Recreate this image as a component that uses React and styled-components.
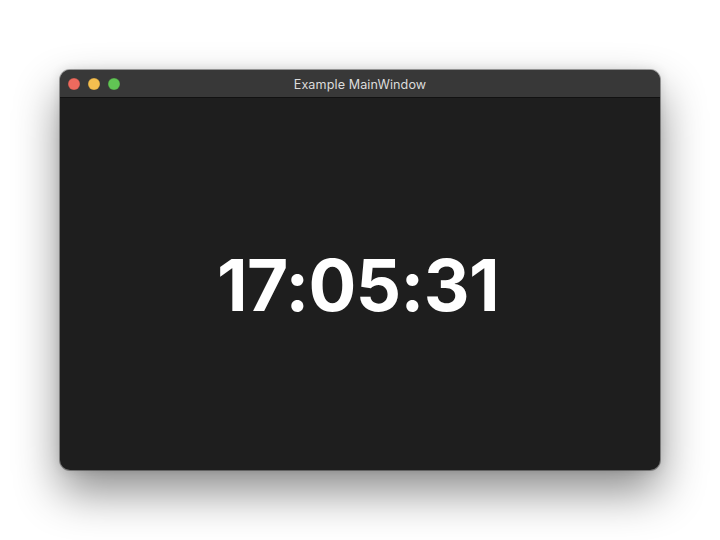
import React from "react";
import styled, { createGlobalStyle } from "styled-components";

const Global = createGlobalStyle`
  html, body { margin: 0; padding: 0; background: #ffffff; }
  body { width: 720px; height: 540px; overflow: hidden; }
`;

const Page = styled.div`
  width: 720px;
  height: 540px;
  box-sizing: border-box;
  padding-top: 70px;
  display: flex;
  justify-content: center;
  align-items: flex-start;
`;

const Window = styled.div`
  width: 600px;
  height: 400px;
  border-radius: 10px;
  overflow: hidden;
  display: flex;
  flex-direction: column;
  background: #1e1e1e;
  box-shadow: 0 0 0 1px rgba(0, 0, 0, 0.35), 0 22px 45px rgba(0, 0, 0, 0.45),
    0 0 12px rgba(0, 0, 0, 0.12);
`;

const TitleBar = styled.div`
  height: 27px;
  flex: 0 0 27px;
  background: #383838;
  border-bottom: 1px solid #111;
  position: relative;
  display: flex;
  align-items: center;
  justify-content: center;
`;

const Lights = styled.div`
  position: absolute;
  left: 8px;
  top: 8px;
  display: flex;
  gap: 8px;
`;

const Light = styled.span`
  width: 12px;
  height: 12px;
  border-radius: 50%;
  background: ${(p) => p.$c};
  box-shadow: inset 0 0 0 0.5px rgba(0, 0, 0, 0.2);
`;

const Title = styled.div`
  font-family: "Inter", "Noto Sans", sans-serif;
  font-size: 12.6px;
  color: #dcdcdc;
  letter-spacing: 0.1px;
  padding-top: 1px;
`;

const Content = styled.div`
  flex: 1;
  display: flex;
  align-items: center;
  justify-content: center;
`;

const Clock = styled.div`
  font-family: "Inter", "Liberation Sans", sans-serif;
  font-weight: 700;
  font-size: 71px;
  color: #ffffff;
  letter-spacing: -0.6px;
  line-height: 1;
  margin-top: 2px;
  margin-right: 4px;
`;

export default function App() {
  return (
    <>
      <Global />
      <Page>
        <Window>
          <TitleBar>
            <Lights>
              <Light $c="#ed6a5e" />
              <Light $c="#f5bf4f" />
              <Light $c="#61c554" />
            </Lights>
            <Title>Example MainWindow</Title>
          </TitleBar>
          <Content>
            <Clock>17:05:31</Clock>
          </Content>
        </Window>
      </Page>
    </>
  );
}
